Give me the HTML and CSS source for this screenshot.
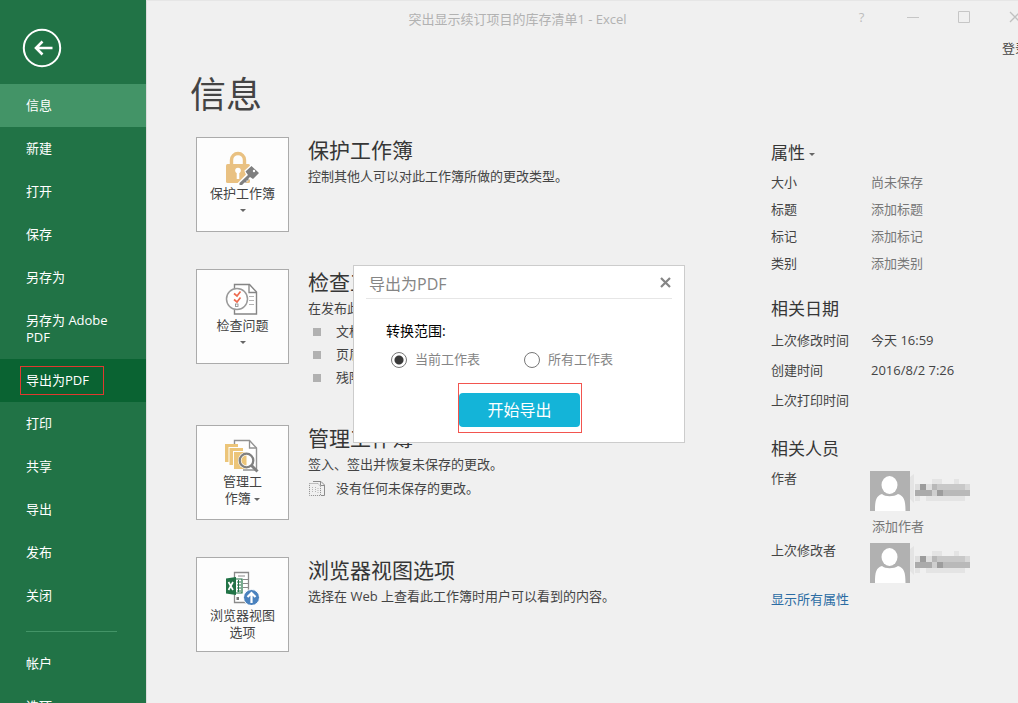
FILE: index.html
```html
<!DOCTYPE html>
<html lang="zh-CN">
<head>
<meta charset="utf-8">
<title>突出显示续订项目的库存清单1 - Excel</title>
<link rel="stylesheet" href="styles.css">
</head>
<body>
<div class="app">
  <nav class="sidebar">
    <button class="back" type="button" aria-label="返回">
      <svg width="40" height="40" viewBox="0 0 40 40" fill="none" stroke="#fff">
        <circle cx="20" cy="20" r="18.2" stroke-width="2"/>
        <path d="M30.500 20H13.500M20.500 13.500L14 20L20.500 26.500" stroke-width="2.600"/>
      </svg>
    </button>
    <ul class="menu">
      <li><a class="item item-active" href="#">信息</a></li>
      <li><a class="item" href="#">新建</a></li>
      <li><a class="item" href="#">打开</a></li>
      <li><a class="item" href="#">保存</a></li>
      <li><a class="item" href="#">另存为</a></li>
      <li><a class="item" href="#">另存为 Adobe PDF</a></li>
      <li><a class="item item-hover" href="#"><span class="mark">导出为PDF</span></a></li>
      <li><a class="item" href="#">打印</a></li>
      <li><a class="item" href="#">共享</a></li>
      <li><a class="item" href="#">导出</a></li>
      <li><a class="item" href="#">发布</a></li>
      <li><a class="item" href="#">关闭</a></li>
      <li class="divider"></li>
      <li><a class="item" href="#">帐户</a></li>
      <li><a class="item" href="#">选项</a></li>
    </ul>
  </nav>

  <main class="main">
    <header class="titlebar">
      <div class="title">突出显示续订项目的库存清单1 - Excel</div>
      <div class="controls">
        <button type="button" aria-label="帮助">?</button>
        <button type="button" aria-label="最小化"><svg width="12" height="12" viewBox="0 0 12 12"><path d="M0 6.500H12" stroke="#c6c6c6"/></svg></button>
        <button type="button" aria-label="最大化"><svg width="12" height="12" viewBox="0 0 12 12"><path d="M.5 .5H11.500V11.500H.5Z" fill="none" stroke="#c6c6c6"/></svg></button>
        <button type="button" aria-label="关闭窗口"><svg width="12" height="12" viewBox="0 0 12 12"><path d="M1 1L11 11M11 1L1 11" stroke="#c0c0c0" stroke-width="1.300"/></svg></button>
      </div>
    </header>
    <a class="signin" href="#">登录</a>
    <h1 class="page-title">信息</h1>

    <div class="content">
      <div class="sections">
        <section class="section">
          <button class="tile" type="button">
            <svg width="36" height="34" viewBox="0 0 36 34">
              <path d="M6.500 14V9a6.500 6.500 0 0 1 13 0V14" fill="none" stroke="#e9c182" stroke-width="3.400"/>
              <rect x="1" y="13" width="24" height="19" rx="1.500" fill="#e9c182"/>
              <circle cx="13" cy="19.500" r="2.800" fill="#fff"/><rect x="11.700" y="20" width="2.600" height="8" fill="#fff"/>
              <g stroke="#fff" stroke-width="2" fill="#fff"><path d="M26.500 14.500L34.500 22L28.500 28L24.500 27L16 35L13 33L22 24L20.500 20Z"/></g>
              <path d="M26.500 15L34 22L28 28L25 26L23.500 27.500V29.500H21.500V31.500H19.500L17 34H14.500V32L23 24L20.500 20.500Z" fill="#7f7f7f"/>
              <circle cx="29" cy="20" r="1.200" fill="#fff"/>
            </svg>
            <span>保护工作簿</span>
            <i class="caret"></i>
          </button>
          <div class="text">
            <h2>保护工作簿</h2>
            <p>控制其他人可以对此工作簿所做的更改类型。</p>
          </div>
        </section>

        <section class="section">
          <button class="tile" type="button">
            <svg width="36" height="34" viewBox="0 0 36 34" fill="none" stroke="#858585">
              <path d="M9.500 1.500H24.500L31.500 9V31H9.500Z" fill="#fff" stroke-width="1.400"/>
              <path d="M24 1.500V9.500H31.500" stroke-width="1.300"/>
              <path d="M24 13.500H29M24 17.500H29M24 21.500H29" stroke="#b3b3b3"/>
              <circle cx="12" cy="16" r="10.500" fill="#fff" stroke="#9a9a9a" stroke-width="1.500"/>
              <path d="M9 10.500L12 13L15.500 8.500M9 16.500L12 19L15.500 14.500" stroke="#ee6c50" stroke-width="1.700"/>
              <rect x="10.500" y="21" width="2.500" height="2.500" stroke-width=".8"/>
            </svg>
            <span>检查问题</span>
            <i class="caret"></i>
          </button>
          <div class="text">
            <h2>检查工作簿</h2>
            <p>在发布此文件之前，请注意其是否包含:</p>
            <ul class="issues">
              <li>文档属性和作者的姓名</li>
              <li>页眉</li>
              <li>残障人士难以阅读的内容</li>
            </ul>
          </div>
        </section>

        <section class="section">
          <button class="tile" type="button">
            <svg width="36" height="34" viewBox="0 0 36 34" fill="none">
              <path d="M9.500 6V1.500H24.500L31.500 9V31H18" fill="#fff" stroke="#929292" stroke-width="1.400"/>
              <path d="M24.500 1.500V9H31.500" stroke="#929292" stroke-width="1.300"/>
              <path d="M0 5H13V8H3.500V23H0Z" fill="#ecc579"/>
              <path d="M4.500 9H18V12H8V26H4.500Z" fill="#ecc579"/>
              <path d="M9 13H22V30H9Z" fill="#ecc579"/>
              <circle cx="21.500" cy="21.500" r="8.500" fill="#fff"/>
              <circle cx="21.500" cy="21.500" r="6.800" fill="#fff" stroke="#808080" stroke-width="2.300"/>
              <path d="M21.500 16.500A5 5 0 0 0 21.500 26.500Z" fill="#ecc579"/>
              <path d="M26.500 26.500L32.500 32.500" stroke="#808080" stroke-width="3"/>
            </svg>
            <span>管理工<br>作簿 <i class="caret"></i></span>
          </button>
          <div class="text">
            <h2>管理工作簿</h2>
            <p>签入、签出并恢复未保存的更改。</p>
            <p class="versions">
              <svg width="17" height="17" viewBox="0 0 17 17" fill="none" stroke="#8c8c8c">
                <path d="M4 1.500H12L15.500 5V15.500H12" />
                <path d="M11.500 1.500V5.500H15.500"/>
                <path d="M.5 3.500H9L11.500 6.500V15.500H.5Z" stroke-dasharray="1 1"/>
                <path d="M3.500 7V13M6.500 7V13M9 8V13" stroke="#b5b5b5" stroke-dasharray="1 1"/>
              </svg>
              <span>没有任何未保存的更改。</span>
            </p>
          </div>
        </section>

        <section class="section">
          <button class="tile tile-tall" type="button">
            <svg width="36" height="34" viewBox="0 0 36 34" fill="none">
              <path d="M9.500 1.500H23.500V31.500H9.500Z" fill="#fff" stroke="#8a8a8a" stroke-width="1.300"/>
              <path d="M13 5H20M18 8.500H23M18 12.500H23M18 16.500H23" stroke="#8a8a8a"/>
              <rect x="11.500" y="26" width="2.500" height="3" fill="#777"/>
              <path d="M10 8H17V22H10Z" fill="#fff" stroke="#217346" stroke-width="1.200"/>
              <path d="M12 11H16M12 14H16M12 17H16M12 20H16M13.500 9V21" stroke="#217346" stroke-width="1"/>
              <path d="M1 7.500L11 6V24L1 22.500Z" fill="#217346"/>
              <path d="M3.500 11L8 19M8 11L3.500 19" stroke="#fff" stroke-width="1.700"/>
              <circle cx="26.500" cy="26.500" r="8" fill="#4a82be" stroke="#fff"/>
              <path d="M26.500 32V22M22.500 26L26.500 22L30.500 26" stroke="#fff" stroke-width="2.200"/>
            </svg>
            <span>浏览器视图<br>选项</span>
          </button>
          <div class="text">
            <h2>浏览器视图选项</h2>
            <p>选择在 Web 上查看此工作簿时用户可以看到的内容。</p>
          </div>
        </section>
      </div>

      <aside class="props">
        <h3>属性<i class="caret"></i></h3>
        <dl class="list">
          <dt>大小</dt><dd class="muted">尚未保存</dd>
          <dt>标题</dt><dd class="muted">添加标题</dd>
          <dt>标记</dt><dd class="muted">添加标记</dd>
          <dt>类别</dt><dd class="muted">添加类别</dd>
        </dl>
        <h3>相关日期</h3>
        <dl class="list list-dates">
          <dt>上次修改时间</dt><dd>今天 16:59</dd>
          <dt>创建时间</dt><dd>2016/8/2 7:26</dd>
          <dt>上次打印时间</dt><dd></dd>
        </dl>
        <h3>相关人员</h3>
        <dl class="list list-people">
          <dt>作者</dt>
          <dd>
            <svg class="person" width="101" height="40" viewBox="0 0 101 40">
              <g id="person">
                <rect width="40" height="40" fill="#b1b1b1"/>
                <ellipse cx="19.500" cy="14" rx="8" ry="9" fill="#fff"/>
                <path d="M5 40C5 29 6 25 12 23C15 26 24 26 28 23C34 25 35.500 29 35.500 40Z" fill="#fff"/>
                <path d="M40 6L44 3V32L40 28Z" fill="#e4e4e4"/>
                <g shape-rendering="crispEdges">
                  <path d="M62 8H72V13H62ZM84 8H89V13H84ZM56 24H95V30H56ZM45 24H50V30H45Z" fill="#e4e4e4"/>
                  <path d="M45 13H50V19H45ZM56 13H62V19H56Z" fill="#dedede"/>
                  <path d="M50 13H56V19H50Z" fill="#9c9c9c"/>
                  <path d="M62 13H95V19H62Z" fill="#c8c8c8"/>
                  <path d="M95 13H100V19H95Z" fill="#d8d8d8"/>
                  <path d="M45 19H62V25H45Z" fill="#ababab"/>
                  <path d="M62 19H67V25H62Z" fill="#cfcfcf"/>
                  <path d="M67 19H73V25H67Z" fill="#9d9d9d"/>
                  <path d="M73 19H100V25H73Z" fill="#b9b9b9"/>
                  <path d="M62 13H67V19H62Z" fill="#b8b8b8"/>
                </g>
              </g>
            </svg>
            <a class="muted add" href="#">添加作者</a>
          </dd>
          <dt>上次修改者</dt>
          <dd><svg class="person" width="101" height="40" viewBox="0 0 101 40"><use href="#person"/></svg></dd>
        </dl>
        <a class="all" href="#">显示所有属性</a>
      </aside>
    </div>
  </main>
</div>

<form class="dialog" role="dialog" aria-labelledby="dialog-title">
  <header class="dialog-head">
    <h2 id="dialog-title">导出为PDF</h2>
    <button type="button" class="close" aria-label="关闭"><svg width="11" height="11" viewBox="0 0 11 11"><path d="M1 1L10 10M10 1L1 10" stroke="#858585" stroke-width="2.200"/></svg></button>
  </header>
  <fieldset class="range">
    <legend>转换范围:</legend>
    <div class="options">
      <label><input type="radio" name="range" checked>当前工作表</label>
      <label><input type="radio" name="range">所有工作表</label>
    </div>
  </fieldset>
  <div class="frame"><button type="button" class="start">开始导出</button></div>
</form>
</body>
</html>
```
FILE: styles.css
```css
* { box-sizing: border-box; }

body {
  margin: 0;
  overflow: hidden;
  background: #f0f0f0;
  color: #444;
  font: 13px/17px "Open Sans", "Noto Sans CJK SC", sans-serif;
}

h1, h2, h3, p, ul, dl, dd { margin: 0; padding: 0; font-weight: 400; }
ul { list-style: none; }
a { color: inherit; text-decoration: none; }
button { padding: 0; border: 0; background: none; color: inherit; font: inherit; }
svg { display: block; }

.app { display: flex; height: 100vh; overflow: hidden; }

.sidebar { flex: 0 0 146px; overflow: hidden; background: #217346; color: #fff; }
.back { display: block; margin: 28px 0 16px 22px; }
.item { display: block; padding: 13px 26px; }
.item-active { background: #439467; }
.item-hover { background: #0a6332; }
.mark {
  display: inline-block;
  margin: -7px -6px;
  padding: 5px 14px 5px 5px;
  border: 1px solid #e0392f;
}
.divider { height: 1px; margin: 14px 29px 10px 26px; background: #439467; }

.main { flex: 1; min-width: 0; border-top: 1px solid #e6e6e6; border-left: 1px solid #dcdcdc; overflow: hidden; }
.titlebar { display: flex; align-items: center; height: 36px; margin-right: -22px; padding-left: 52px; }
.title { flex: 1; text-align: center; color: #b2b2b2; }
.controls { display: flex; margin-bottom: 4px; color: #bdbdbd; }
.controls button { display: grid; place-items: center; width: 51px; height: 24px; }
.signin { display: block; width: max-content; margin: 3px -10px 0 auto; }
.page-title { padding: 8px 0 0 43px; font-size: 36px; line-height: 60px; }

.content { display: grid; grid-template-columns: 1fr 247px; padding: 12px 0 0 49px; }
.sections { display: grid; gap: 36px; align-content: start; }
.section { display: flex; gap: 19px; min-height: 96px; }
.tile {
  display: flex;
  flex: 0 0 93px;
  flex-direction: column;
  align-items: center;
  height: 95px;
  padding-top: 13px;
  border: 1px solid #ababab;
  background: #fdfdfd;
}
.tile-tall { gap: 2px; }
.caret {
  display: inline-block;
  border: 3px solid transparent;
  border-top-color: #666;
  border-bottom: 0;
  vertical-align: middle;
}
.tile > .caret { margin-top: 7px; }
.text h2 { font-size: 21px; line-height: 27px; color: #363636; }
.text p { line-height: 24px; }
.issues li { display: flex; align-items: center; gap: 15px; padding-left: 5px; line-height: 23px; }
.issues li::before { content: ""; width: 8px; height: 8px; background: #b1b1b1; }
.text .versions { display: flex; align-items: center; gap: 10px; padding-left: 1px; }

.props h3 { font-size: 17px; line-height: 32px; color: #363636; }
.props .caret { margin-left: 4px; }
.list { display: grid; grid-template-columns: 100px 1fr; grid-auto-rows: 27px; align-items: center; margin-bottom: 16px; }
.list-dates { grid-auto-rows: 30px; margin-bottom: 18px; }
.list-people { grid-auto-rows: auto; align-items: start; row-gap: 6px; margin-bottom: 8px; }
.list-people dt { padding-top: 5px; }
.muted { color: #777; }
.person { margin: 6px 0 0 -1px; }
.add { display: block; margin: 7px 0 -4px 1px; }
.all { color: #2b6ca3; }

.dialog {
  position: absolute;
  top: 265px;
  left: 353px;
  width: 332px;
  padding: 0 12px 9px;
  border: 1px solid #ccc;
  background: #fff;
}
.dialog-head { display: flex; align-items: center; justify-content: space-between; height: 33px; padding: 4px 1px 0 3px; border-bottom: 1px solid #e6e6e6; }
.dialog-head h2 { font-size: 16px; line-height: 24px; color: #858585; }
.close { margin-bottom: 4px; }
.range { margin: 0; padding: 22px 20px 15px; border: 0; }
.range legend { float: left; width: 100%; padding: 0; font-size: 14px; line-height: 20px; color: #000; }
.options { display: flex; clear: both; gap: 44px; padding: 10px 0 0 5px; }
.options label { display: flex; align-items: center; gap: 8px; color: #858585; }
.options input {
  appearance: none;
  width: 16px;
  height: 16px;
  margin: 0;
  border: 1px solid #777;
  border-radius: 50%;
  background: #fff;
}
.options input:checked { background: radial-gradient(circle, #3a3a3a 4px, #fff 5px); }
.frame { width: 124px; margin-left: 92px; padding: 9px 1px 5px 0; border: 1px solid #f2554f; }
.start { display: block; width: 100%; height: 34px; border-radius: 4px; background: #14b4d8; color: #fff; font-size: 16px; }
```
